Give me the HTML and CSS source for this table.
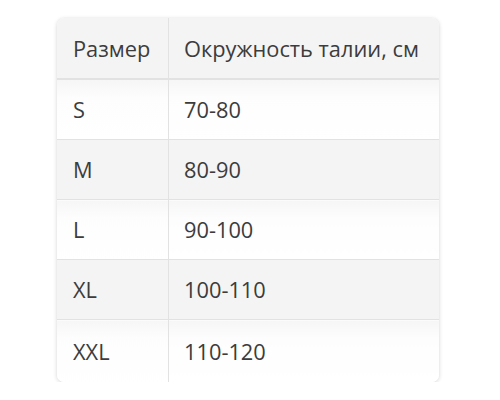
FILE: index.html
```html
<!DOCTYPE html>
<html lang="ru">
<head>
<meta charset="utf-8">
<link rel="stylesheet" href="styles.css">
</head>
<body>
<div class="card">
<table class="sizes">
<thead>
<tr><th class="c1">Размер</th><th>Окружность талии, см</th></tr>
</thead>
<tbody>
<tr><td class="c1">S</td><td>70-80</td></tr>
<tr><td class="c1">M</td><td>80-90</td></tr>
<tr><td class="c1">L</td><td>90-100</td></tr>
<tr><td class="c1">XL</td><td>100-110</td></tr>
<tr><td class="c1">XXL</td><td>110-120</td></tr>
</tbody>
</table>
</div>
</body>
</html>
```
FILE: styles.css
```css
html, body { margin: 0; padding: 0; background: #fff; }
body { padding: 18px 0 0 57px; font-family: "Open Sans", "DejaVu Sans", sans-serif; }
.card {
  width: 382px;
  border-radius: 7px;
  overflow: hidden;
  box-shadow: 0 1px 4px rgba(0,0,0,0.16), 0 0 1px rgba(0,0,0,0.08);
}
.sizes {
  width: 100%;
  border-collapse: collapse;
  font-size: 21.8px;
  color: #3c3c3c;
  table-layout: fixed;
}
.sizes th, .sizes td {
  text-align: left;
  font-weight: normal;
  padding: 0 16px;
  height: 59px;
  white-space: nowrap;
  border-bottom: 1px solid #e2e2e2;
}
.sizes th { height: 60px; background: #f4f4f4; border-bottom: 2px solid #e2e2e2; }
.sizes td + td, .sizes th + th { padding-left: 15px; }
.sizes .c1 { width: 79px; border-right: 1px solid #e2e2e2; }
.sizes tbody tr:nth-child(odd) td { background: linear-gradient(#f6f6f6, #fdfdfd 18px, #fff); }
.sizes tbody tr:nth-child(even) td { background: #f4f4f4; }
.sizes tbody tr:last-child td { border-bottom: none; height: 62px; }
```
